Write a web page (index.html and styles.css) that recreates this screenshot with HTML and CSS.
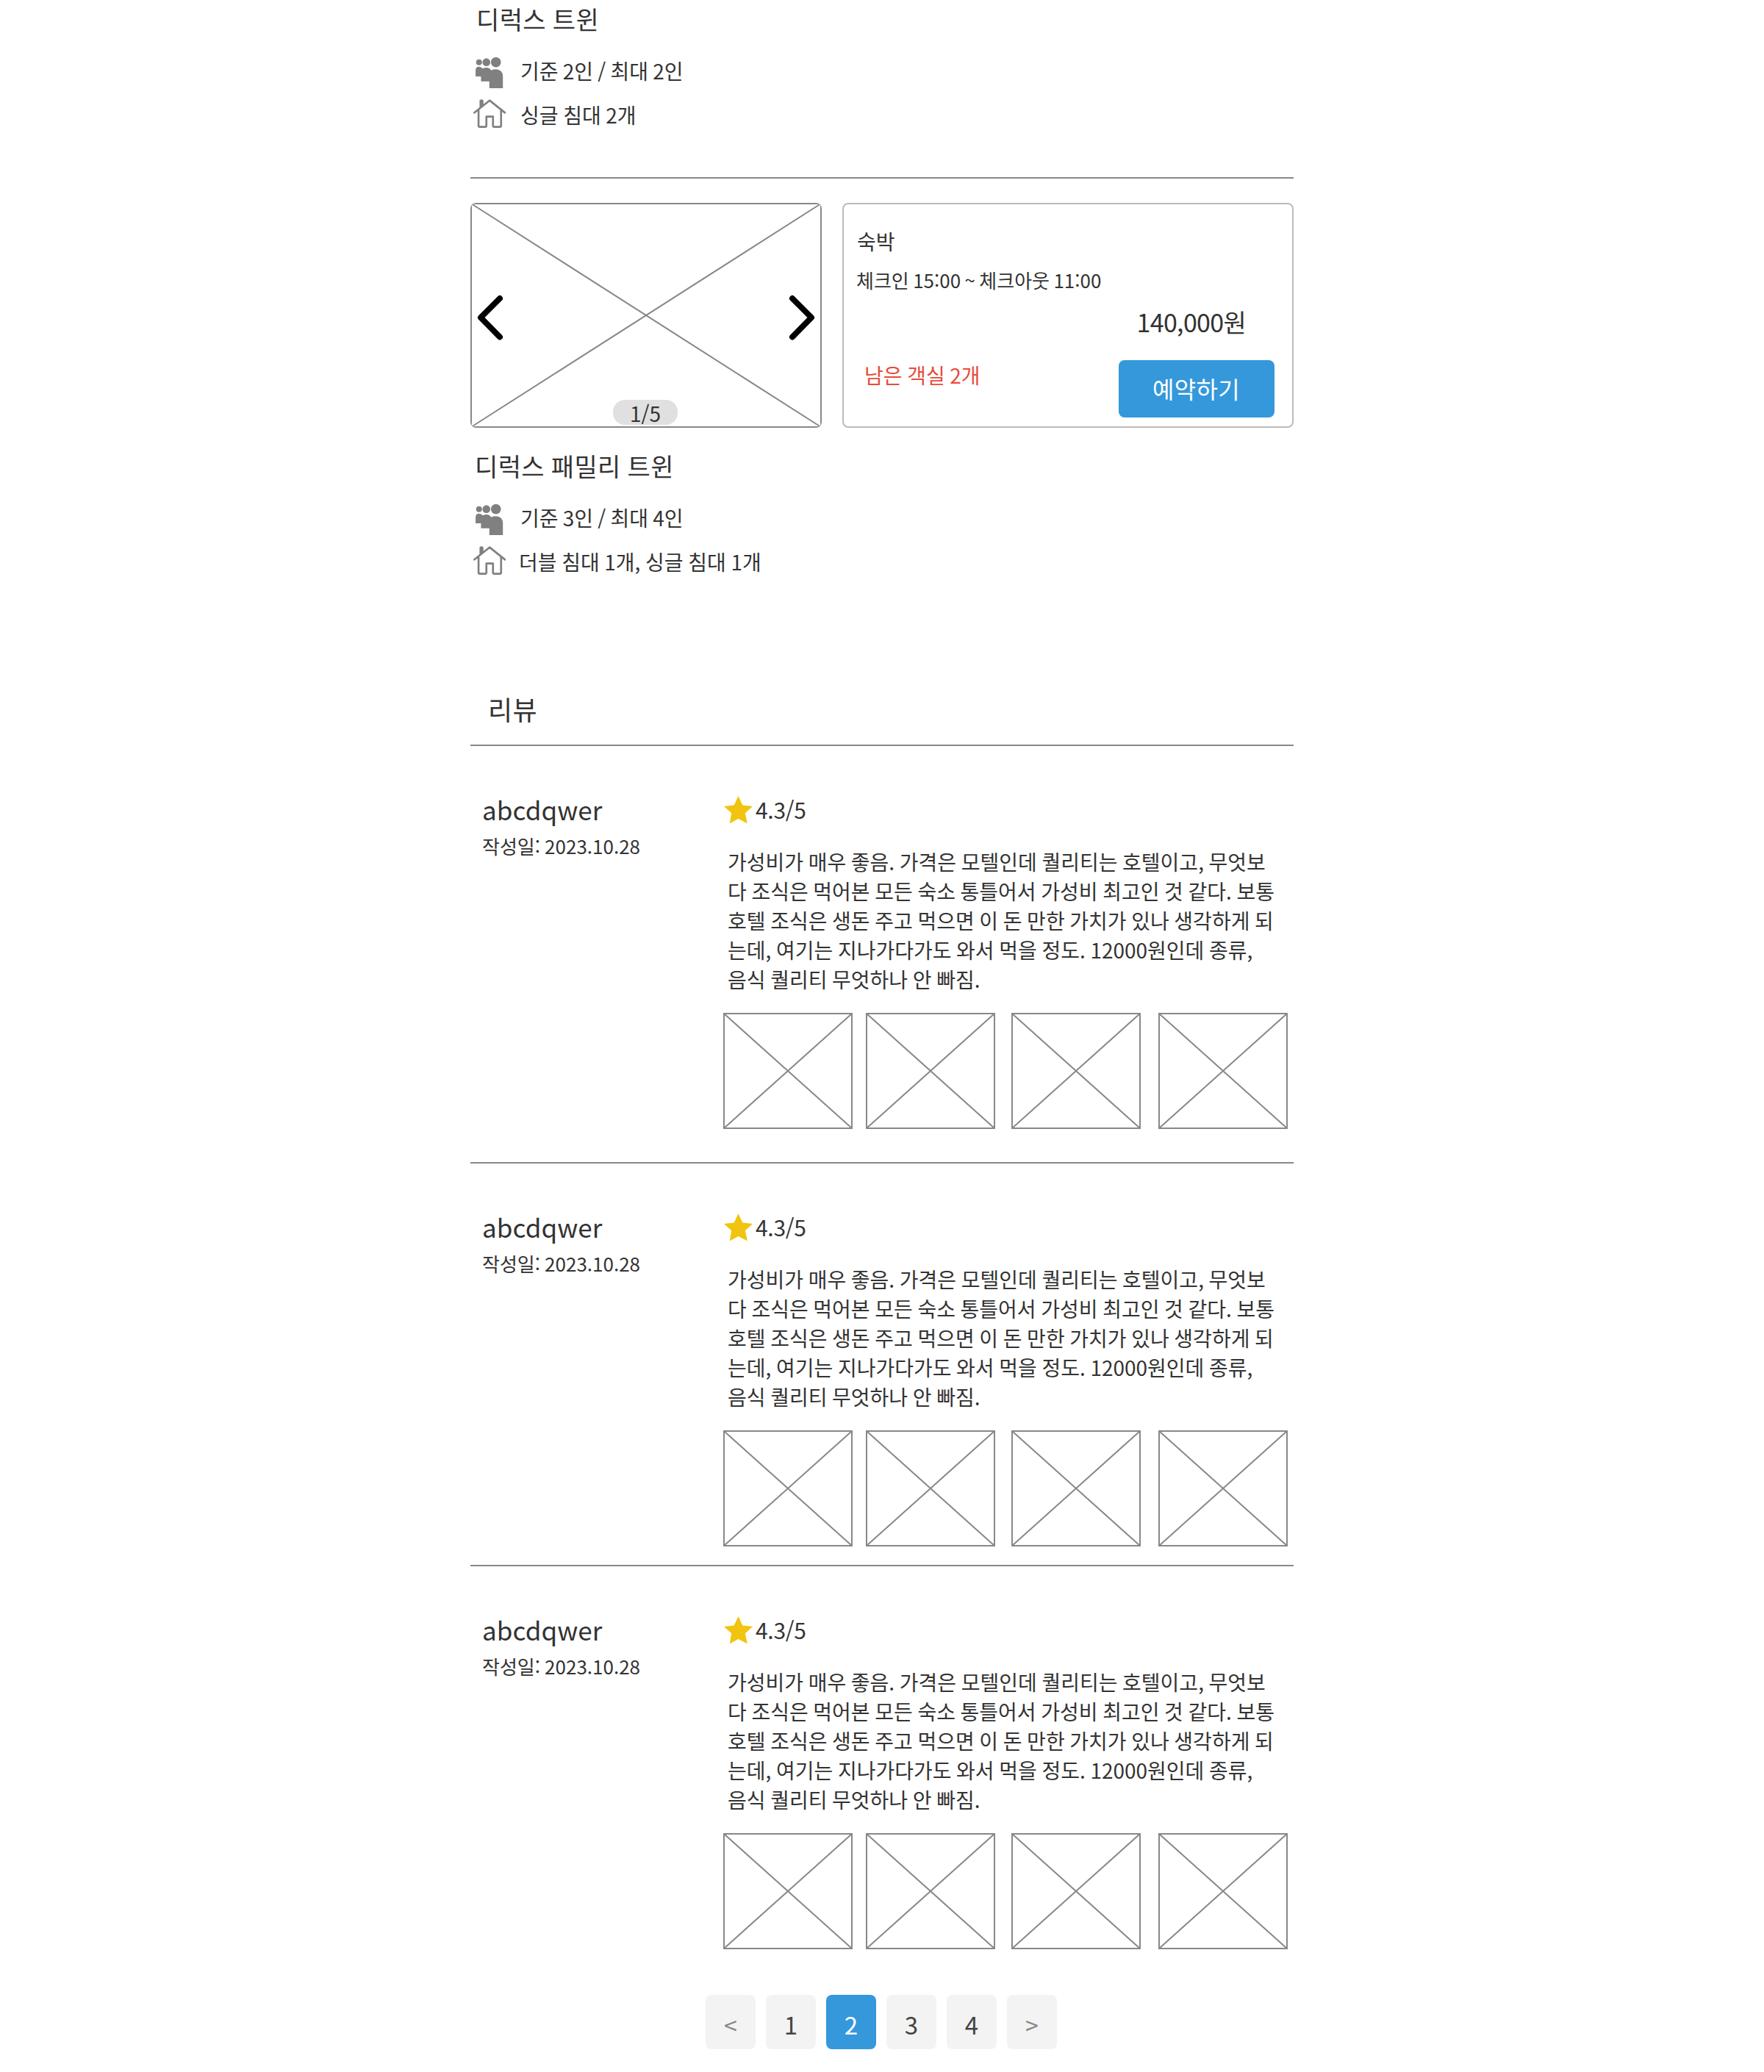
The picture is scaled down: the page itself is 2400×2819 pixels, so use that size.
FILE: index.html
```html
<!DOCTYPE html>
<html lang="ko">
<head>
<meta charset="utf-8">
<title>객실 및 리뷰</title>
<link rel="stylesheet" href="styles.css">
</head>
<body>
<svg class="defs" aria-hidden="true">
  <symbol id="people" viewBox="0 0 112 126">
    <circle cx="14" cy="20" r="12"/><circle cx="44" cy="20" r="16"/><circle cx="83" cy="20" r="20.5"/>
    <path d="M0 78V52Q0 38 14 38Q24 38 29 46Q36 42 44 42Q58 42 63 53Q72 49 84 49Q112 51 112 80V126H56V98H22V78Z"/>
  </symbol>
  <symbol id="house" viewBox="0 0 133 117">
    <path d="M4 55L66 5L129 55M21 43V108Q21 113 26 113H48Q53 113 53 108V71H80V108Q80 113 85 113H107Q113 113 113 108V43" fill="none" stroke="currentColor" stroke-width="8" stroke-linecap="round" stroke-linejoin="round"/>
    <path d="M25 38V8Q25 1 33 1Q41 1 41 8V25Z"/>
  </symbol>
  <symbol id="star" viewBox="0 0 39 37.4">
    <path d="M19.5 0L25.3 12.5L39 14L28.8 23.3L31.9 37.4L19.5 31L7.7 37.4L10.2 23.3L0 14L13.7 12.5Z"/>
  </symbol>
  <symbol id="thumb" viewBox="0 0 176 158">
    <path d="M1 1H175V157H1ZM1 1L175 157M175 1L1 157" fill="none" stroke="currentColor" stroke-width="2"/>
  </symbol>
</svg>
<main class="page">
  <section class="room">
    <h2 class="room-name">디럭스 트윈</h2>
    <p class="fact"><svg class="people"><use href="#people"/></svg><span class="guests">기준 2인 / 최대 2인</span></p>
    <p class="fact"><svg class="house"><use href="#house"/></svg><span>싱글 침대 2개</span></p>
  </section>
  <section class="room room-second">
    <div class="offer">
      <div class="photo">
        <svg class="photo-art" viewBox="0 0 478 306"><path d="M1 1H477V305H1ZM1 1L477 305M477 1L1 305" fill="none" stroke="#888" stroke-width="2"/><path d="M40 130L14 156L40 182.500M438 130L464 156L438 182.500" fill="none" stroke="#000" stroke-width="8" stroke-linecap="round" stroke-linejoin="round"/></svg>
        <span class="counter">1/5</span>
      </div>
      <div class="card">
        <h3 class="stay">숙박</h3>
        <p class="times">체크인 15:00 ~ 체크아웃 11:00</p>
        <p class="price">140,000원</p>
        <div class="book-row"><span class="left">남은 객실 2개</span><button class="book">예약하기</button></div>
      </div>
    </div>
    <h2 class="room-name shifted">디럭스 패밀리 트윈</h2>
    <p class="fact"><svg class="people"><use href="#people"/></svg><span class="guests">기준 3인 / 최대 4인</span></p>
    <p class="fact"><svg class="house"><use href="#house"/></svg><span class="beds">더블 침대 1개, 싱글 침대 1개</span></p>
  </section>
  <h2 class="reviews-title">리뷰</h2>
  <article class="review">
    <div class="author"><h3 class="user">abcdqwer</h3><p class="date">작성일: 2023.10.28</p></div>
    <div class="content">
      <p class="rating"><svg class="star"><use href="#star"/></svg><span>4.3/5</span></p>
      <p class="text">가성비가 매우 좋음. 가격은 모텔인데 퀄리티는 호텔이고, 무엇보<br>다 조식은 먹어본 모든 숙소 통틀어서 가성비 최고인 것 같다. 보통<br>호텔 조식은 생돈 주고 먹으면 이 돈 만한 가치가 있나 생각하게 되<br>는데, 여기는 지나가다가도 와서 먹을 정도. 12000원인데 종류,<br>음식 퀄리티 무엇하나 안 빠짐.</p>
      <div class="thumbs"><svg><use href="#thumb"/></svg><svg><use href="#thumb"/></svg><svg><use href="#thumb"/></svg><svg><use href="#thumb"/></svg></div>
    </div>
  </article>
  <article class="review tight">
    <div class="author"><h3 class="user">abcdqwer</h3><p class="date">작성일: 2023.10.28</p></div>
    <div class="content">
      <p class="rating"><svg class="star"><use href="#star"/></svg><span>4.3/5</span></p>
      <p class="text">가성비가 매우 좋음. 가격은 모텔인데 퀄리티는 호텔이고, 무엇보<br>다 조식은 먹어본 모든 숙소 통틀어서 가성비 최고인 것 같다. 보통<br>호텔 조식은 생돈 주고 먹으면 이 돈 만한 가치가 있나 생각하게 되<br>는데, 여기는 지나가다가도 와서 먹을 정도. 12000원인데 종류,<br>음식 퀄리티 무엇하나 안 빠짐.</p>
      <div class="thumbs"><svg><use href="#thumb"/></svg><svg><use href="#thumb"/></svg><svg><use href="#thumb"/></svg><svg><use href="#thumb"/></svg></div>
    </div>
  </article>
  <article class="review last">
    <div class="author"><h3 class="user">abcdqwer</h3><p class="date">작성일: 2023.10.28</p></div>
    <div class="content">
      <p class="rating"><svg class="star"><use href="#star"/></svg><span>4.3/5</span></p>
      <p class="text">가성비가 매우 좋음. 가격은 모텔인데 퀄리티는 호텔이고, 무엇보<br>다 조식은 먹어본 모든 숙소 통틀어서 가성비 최고인 것 같다. 보통<br>호텔 조식은 생돈 주고 먹으면 이 돈 만한 가치가 있나 생각하게 되<br>는데, 여기는 지나가다가도 와서 먹을 정도. 12000원인데 종류,<br>음식 퀄리티 무엇하나 안 빠짐.</p>
      <div class="thumbs"><svg><use href="#thumb"/></svg><svg><use href="#thumb"/></svg><svg><use href="#thumb"/></svg><svg><use href="#thumb"/></svg></div>
    </div>
  </article>
  <nav class="pages">
    <a class="page-link step">&lt;</a><a class="page-link">1</a><a class="page-link current">2</a><a class="page-link">3</a><a class="page-link">4</a><a class="page-link step">&gt;</a>
  </nav>
</main>
</body>
</html>
```
FILE: styles.css
```css
* { box-sizing: border-box; }
body { margin: 0; background: #fff; color: #333; font: 400 28px/40px "Noto Sans CJK KR", sans-serif; word-spacing: -1.200px; }
h2, h3, p { margin: 0; font-weight: 400; white-space: nowrap; }
svg { display: block; flex: none; fill: currentColor; }
.defs { position: absolute; width: 0; height: 0; }
.page { width: 1120px; height: 2819px; margin: 0 auto; overflow: hidden; }

.room { height: 243px; padding-top: 6px; border-bottom: 2px solid #888; }
.room-second { height: 696px; padding-top: 33px; border: 0; }
.room-name { margin-bottom: 30px; padding-left: 8px; font-size: 34px; letter-spacing: .400px; }
.shifted { padding-left: 6px; margin-top: 32px; }
.fact { display: flex; height: 40px; margin-bottom: 20px; }
.fact span { margin-left: auto; width: 1052px; }
.fact .guests { word-spacing: -1.600px; }
.fact .beds { width: 1054px; }
.people { width: 37.500px; height: 42px; margin: 2px 0 0 7px; color: #808080; }
.house { width: 44.500px; height: 39px; margin: -1px 0 0 3.500px; color: #808080; }

.offer { display: flex; gap: 28px; height: 306px; }
.photo { position: relative; width: 478px; border-radius: 8px; overflow: hidden; }
.photo-art { width: 478px; height: 306px; }
.counter { position: absolute; left: 194px; top: 268px; width: 88px; height: 34px; border-radius: 16px; background: #e0e0e0; text-align: center; line-height: 36px; }
.card { width: 614px; padding: 30px 24px 0 17px; border: 2px solid #bbb; border-radius: 8px; }
.stay { padding-left: 1px; font-size: 28px; }
.times { margin-top: 13px; font-size: 26px; word-spacing: -1.900px; }
.price { margin: 17px 39px 32px 0; font-size: 34px; letter-spacing: -.700px; text-align: right; }
.book-row { display: flex; justify-content: space-between; padding-left: 11px; }
.left { color: #e74c3c; }
.book { width: 212px; height: 78px; padding: 0 1px 2px 0; border: 0; border-radius: 8px; background: #3498db; color: #fff; font: inherit; font-size: 32px; letter-spacing: .300px; }

.reviews-title { height: 76px; padding-left: 24px; border-bottom: 2px solid #888; font-size: 36px; line-height: 50px; letter-spacing: .400px; }
.review { display: flex; height: 568px; padding-top: 61px; border-bottom: 2px solid #888; }
.tight { height: 548px; }
.last { height: 521px; border: 0; }
.author { width: 344px; padding-left: 16px; }
.user { font-size: 35px; line-height: 50px; letter-spacing: .100px; }
.date { margin-top: 5px; font-size: 26px; }
.content { width: 776px; padding-top: 5px; }
.rating { display: flex; gap: 4px; padding-left: 1px; font-size: 30px; letter-spacing: -.300px; }
.star { width: 39px; height: 37.400px; margin-top: 2px; color: #f1c40f; }
.text { margin: 31px 0 26px 6px; }
.thumbs { display: flex; gap: 18px; color: #888; }
.thumbs svg { width: 176px; height: 158px; }
.thumbs svg:nth-child(3) { margin-left: 4px; }
.thumbs svg:nth-child(4) { margin-left: 6px; }

.pages { display: flex; justify-content: center; gap: 14px; margin-top: 62px; padding-right: 2px; }
.page-link { width: 68px; height: 74px; border-radius: 8px; background: #f3f3f3; color: #444; font-size: 33px; line-height: 80px; text-align: center; }
.current { background: #3498db; color: #fff; }
.step { color: #888; font-size: 32px; }
```
